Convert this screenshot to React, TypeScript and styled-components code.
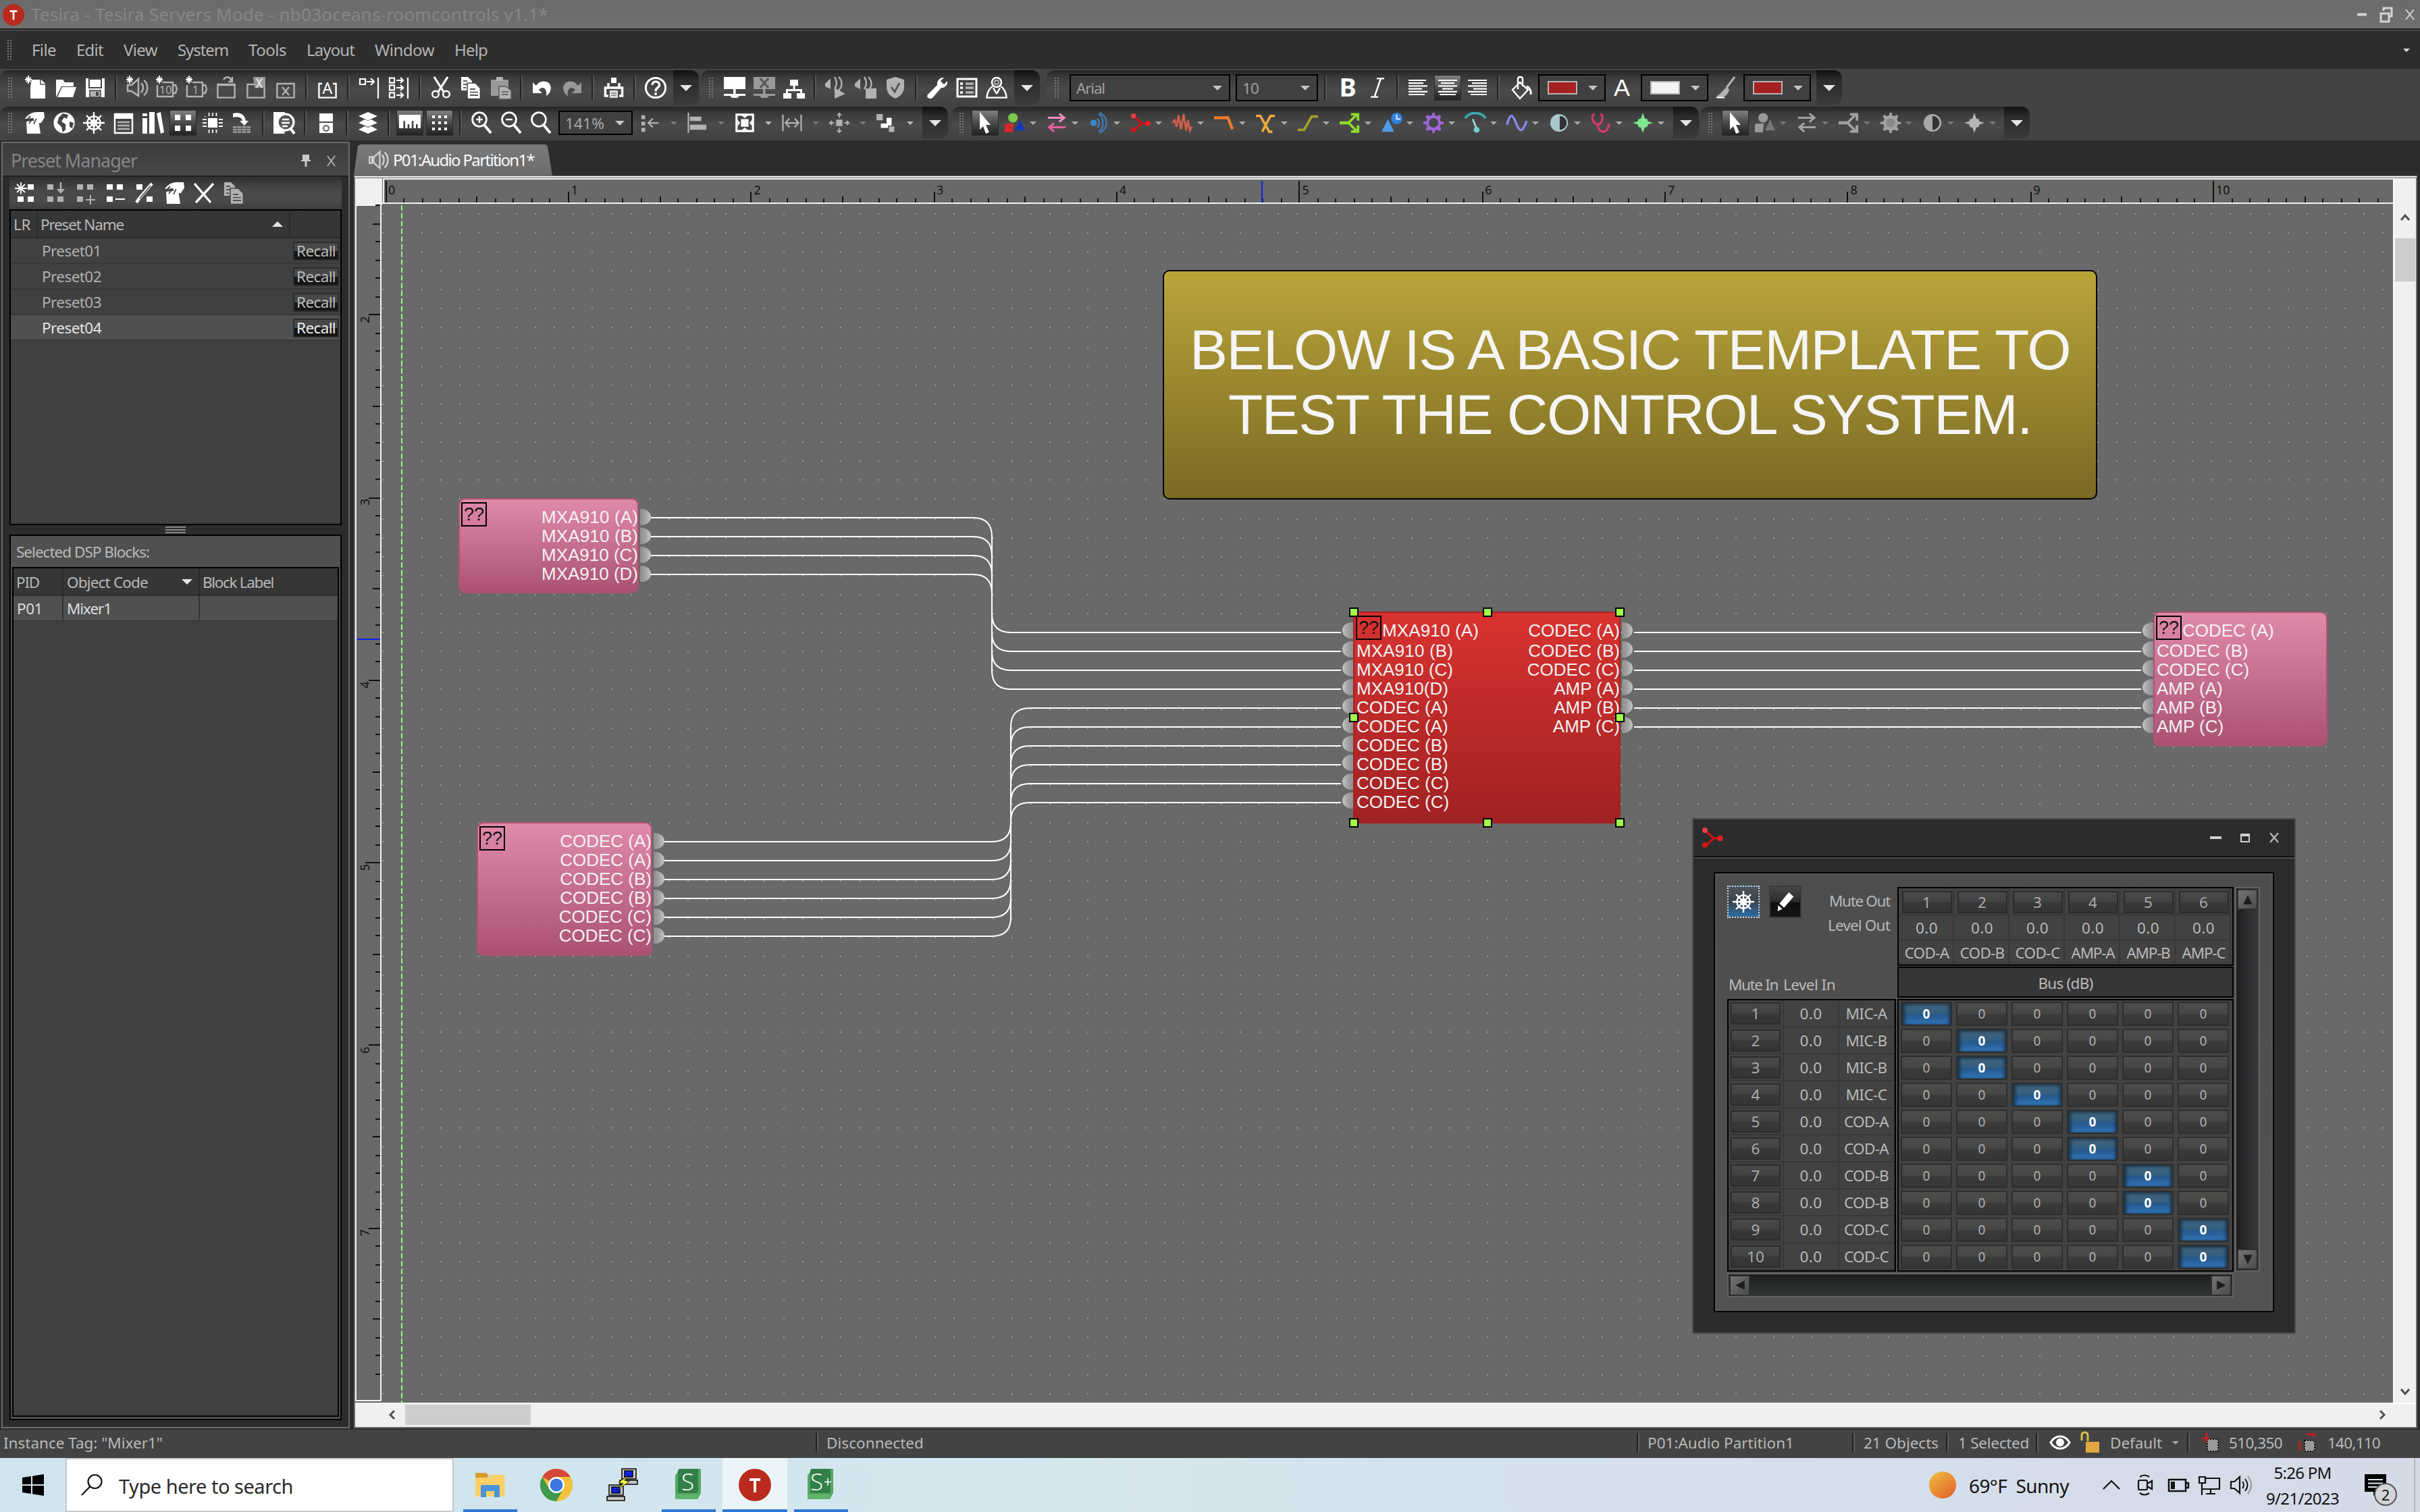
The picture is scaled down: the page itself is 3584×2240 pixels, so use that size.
import React, { useLayoutEffect, useRef, useState } from 'react';
import styled, { createGlobalStyle, css } from 'styled-components';

const tahoma = `"Noto Sans", "DejaVu Sans", sans-serif`;
const segoe = `"Noto Sans", "Open Sans", sans-serif`;
const arial = `"Liberation Sans", Arial, sans-serif`;

const Global = createGlobalStyle`
  * { box-sizing: border-box; }
  body { margin: 0; background: #2c2c2c; overflow: hidden; }
`;

/* ---------- text ---------- */

const TextSpan = styled.span<{ $size: number; $color: string; $font: string; $bold?: boolean }>`
  display: inline-block;
  white-space: pre;
  flex: none;
  font-family: ${p => p.$font};
  font-size: ${p => p.$size}px;
  font-weight: ${p => (p.$bold ? 700 : 400)};
  color: ${p => p.$color};
  line-height: 1.2;
`;

type TextProps = { children: string; w?: number; size?: number; color?: string; font?: string; bold?: boolean };

/** Text whose tracking is adjusted so the string spans `w` pixels. */
function Text({ children, w, size = 22.5, color = '#b9b9b9', font = tahoma, bold }: TextProps) {
  const ref = useRef<HTMLSpanElement>(null);
  const [track, setTrack] = useState(0);
  useLayoutEffect(() => {
    if (!w || !ref.current) return;
    const natural = ref.current.getBoundingClientRect().width - track * children.length;
    setTrack((w - natural) / children.length);
  }, [w, children]);
  return (
    <TextSpan ref={ref} $size={size} $color={color} $font={font} $bold={bold} style={{ letterSpacing: track }}>
      {children}
    </TextSpan>
  );
}

/* ---------- icons: 16 unit grid ---------- */

const W = '#ffffff';
const G = '#b2b2b2';

const Svg = styled.svg<{ $s?: number }>`
  width: ${p => p.$s ?? 32}px;
  height: ${p => p.$s ?? 32}px;
  flex: none;
  display: block;
  overflow: visible;
`;

const st = (c: string, w = 1.2) => ({ fill: 'none', stroke: c, strokeWidth: w });
const pages = (c: string) => (
  <>
    <path d="M1 0h5l3 3v7H1z" fill={c} />
    <path d="M5.500 4.500h6l3.700 3.700V16.300H5.500z" fill={c} stroke="#444" strokeWidth=".8" />
    <path d="M7.500 9h4M7.500 11.300h6M7.500 13.500h6M2.500 3h3M2.500 5.500h2.500M2.500 8h2" {...st('#555', 0.9)} />
  </>
);
const hand = (
  <>
    <path d="M2 7l9-1 1.500 10H2.500z" fill={W} />
    <path d="M1 5C3 2 6 0 10 0h5l.5 4-2.500 4-4 .500-2-4" fill={W} />
    <path d="M1 7l4-4M4 8.500l3-4M7.500 9l1.800-4" {...st('#444', 0.9)} />
  </>
);
const wheel = (
  <g {...st(W, 1.200)}>
    <circle cx="8" cy="8" r="4.800" />
    <circle cx="8" cy="8" r="2" />
    <path d="M8 0v16M0 8h16M2.500 2.500l11 11M13.500 2.500l-11 11" />
  </g>
);
const mixer = (
  <g>
    <path d="M3 3l6 5.500L3 14M9 8.500h5" {...st('#c11', 1.600)} />
    <circle cx="2.500" cy="2.500" r="2" fill="#e84040" />
    <circle cx="2.500" cy="13.500" r="2" fill="#d01818" />
    <circle cx="13.800" cy="8.500" r="2.200" fill="#e02020" />
  </g>
);
const gearPath = 'M7 0h2v2l2 .600 2-1 1 1.400-1 2 .800 2H16v2h-2.200L13 11l1.200 2-1.200 1.400-2-1L9 14v2H7v-2l-2-.600-2 1L1.800 13 3 11l-.800-2H0V7h2.200L3 5 1.800 3 3 1.600l2 1L7 2z';
const shapes = (a: string, b: string, c: string) => (
  <>
    <circle cx="6.500" cy="4" r="3.800" fill={a} />
    <path d="M0 9.500l1-1h6l-.700 7H0z" fill={b} />
    <path d="M8 14l4-8.500 4 8.500z" fill={c} />
  </>
);
const swap = (a: string, b: string) => (
  <>
    <path d="M1 4h13M10 .700L14 4l-4 3.300" {...st(a, 1.600)} />
    <path d="M15 11.500H2M6 8.200L2 11.500l4 3.500" {...st(b, 1.600)} />
  </>
);
const branch = (c: string) => (
  <>
    <path d="M0 8h7" {...st(c, 2.400)} />
    <path d="M7 8L13 2M7 8l6 6M9 1.200h5.500v5M9 14.800h5.500v-5" {...st(c, 2)} />
  </>
);
const star4 = (c: string) => <path d="M8 0l1.500 4.500 2 .5.500 1.800L16 8l-4 1.200-.5 2-2 .5L8 16l-1.500-4.300-2-.5-.5-2L0 8l4-1.200.5-1.800 2-.5z" fill={c} />;
const speaker = (c: string) => (
  <>
    <path d="M1 6h3l5-4.500v12.500L4 10.500H1z" {...st(c, 1.300)} />
    <path d="M11 4.500c2 1.500 2 5 0 7M13 2.500c3.500 2.500 3.500 8.500 0 11" {...st(c, 1.200)} />
  </>
);
const sparkle = (c: string) => <path d="M2.500-1v6M0 2h5M.800.300l3.500 3.500M4.300.300L.800 3.800" {...st(c, 0.900)} />;
const magnifier = (
  <>
    <circle cx="6.500" cy="5.500" r="5.200" {...st(W, 1.400)} />
    <path d="M10 9.500l5 6" {...st(W, 2)} />
  </>
);
const lines = (o: number[][]) => (
  <g {...st(W, 1.100)}>
    {o.map(([a, b], i) => (
      <path key={i} d={`M${a} ${2.500 + i * 2.100}H${b}`} />
    ))}
  </g>
);
const quad = (c: string, skip: number[] = []) =>
  [[2, 1.500], [9.500, 1.500], [2, 10.500], [9.500, 10.500]].map(([x, y], i) =>
    skip.includes(i) ? null : <rect key={i} x={x} y={y} width="4.500" height="4" fill={c} />);

const icons: Record<string, React.ReactNode> = {
  newfile: <><path d="M5 2h7l3 3v11H4V7z" fill={W} /><path d="M11.500 2v3.500H15" {...st('#555', .8)} />{sparkle(W)}<path d="M2.500 0v5" {...st(W, 1)} /></>,
  open: <path d="M1 15V2h5l1.500 2H14v3H5zM2 15L5.500 7.500H16L13.500 15z" fill={W} />,
  save: <><path d="M1 1h14v14H1z" fill={W} /><path d="M3.500 1.500h9V8h-9z" fill={W} stroke="#444" /><rect x="4" y="10" width="8" height="5" fill={G} stroke="#444" strokeWidth=".8" /><rect x="8.500" y="11" width="2" height="3" fill="#444" /></>,
  spk: <>{speaker(G)}{sparkle(W)}</>,
  ten: <><path d="M1 6v8.500h11.500V4H5M12.500 6h2l1 3-1 3h-2" {...st(G)} />{sparkle(W)}<text x="2.500" y="12.500" fontSize="8" fill={G} fontFamily="Noto Sans">10</text></>,
  one: <><path d="M1 6v8.500h11.500V4H5M12.500 6h2l1 3-1 3h-2" {...st(G)} />{sparkle(W)}<text x="5" y="12.500" fontSize="8" fill={G} fontFamily="Noto Sans">1</text></>,
  winfwd: <><path d="M1.700 5.500h12.600v9.800H1.700z" {...st(G)} /><path d="M1.700 6h12.600M6 2c2-3 5-2 6 1M12.500 0v3.500H9.500" {...st(G)} /></>,
  winx: <><path d="M1.700 5.500h12.600v9.800H1.700z" {...st(G)} /><path d="M6 0h9v8H7z" fill="#999" /><path d="M8.500 1l4 7M12.500 1l-4 7" {...st('#e0e0e0')} /></>,
  winclose: <><path d="M1.700 5h12.600v10.300H1.700z" {...st(G)} /><path d="M5.500 7.500l5 6M10.500 7.500l-5 6" {...st(G)} /></>,
  winA: <><path d="M4 5H1.700v10.300h12.600V5H12" {...st(W)} /><text x="4.300" y="12.300" fontSize="11.500" fill={W} fontFamily="Noto Sans">A</text></>,
  toBar: <><path d="M1 1.500h4v4H1z M6 3.500h5M9 1l2.500 2.500L9 6M14.500 .500V16" {...st(W, 1.100)} /></>,
  toBar3: <g {...st(W, 1.100)}><path d="M1 .800h3.500v3.500H1zM1 6.200h3.500v3.500H1zM1 11.700h3.500v3.500H1zM6 2.500h5M6 8h5M6 13.500h5M14.500.500V16" /><path d="M9 .500l2 2-2 2M9 6l2 2-2 2M9 11.500l2 2-2 2" /></g>,
  cut: <><path d="M3 0l7 11M13 0L6 11" {...st(W, 1.600)} /><circle cx="4" cy="12.800" r="2.400" {...st(W)} /><circle cx="12" cy="12.800" r="2.400" {...st(W)} /></>,
  copy: pages(W),
  paste: <><path d="M1 2h13v12H1z" fill="#999" /><path d="M5 0h5v3H5z" fill={G} /><path d="M7 7h5l4 3v6.500H7z" fill={G} stroke="#555" strokeWidth=".7" /><path d="M9 11h5M9 13h5" {...st('#555', .8)} /></>,
  undo: <path d="M1 4v8h7L5.500 9.500C8 6.500 12 8 11 14c4-2 5-9 0-10.500-4-1-6 1-7.500 3z" fill={W} />,
  redo: <path d="M15 4v8H8l2.500-2.500C8 6.500 4 8 5 14 1 12 0 5 5 3.500c4-1 6 1 7.500 3z" fill="#999" />,
  print: <><path d="M6 .500h4v4H6z" fill={W} /><path d="M4 4.500v3.500H1.700V14H4M12 4.500v3.500h2.300V14H12M4 8h8" {...st(W, 1.700)} /><path d="M5 10h6v5.500H5z" fill="#ddd" /><path d="M6 12h4M6 13.700h4" {...st('#777', .7)} /></>,
  help: <><circle cx="8" cy="8" r="7.300" {...st(W, 1.500)} /><path d="M5.500 6C5.500 2.500 10.800 2.700 10.800 6 10.800 8 8 8 8 10.500M8 11.500v2" {...st(W, 1.700)} /></>,
  net: <path d="M0 0h16v9H8.800v3.500H16v1.500h-4.500l-1.500 1.500H6L4.500 14H0v-1.500h7V9H0z" fill={W} />,
  netx: <><path d="M0 0h16v9H8.800v3.500H16v1.500h-4.500l-1.500 1.500H6L4.500 14H0v-1.500h7V9H0z" fill="#999" /><path d="M5 1l6 7M11 1L5 8" {...st('#555', 1.500)} /></>,
  tree: <path d="M5 2h6v4.500H8.700v2.500H14v3h2v4h-6v-4h2.500v-1.500h-9V12H6v4H0v-4h2V9h5.300V6.500H5z" fill={W} />,
  playspk: <><path d="M0 5l4-4v8L0 7z" fill={G} /><path d="M7 0c2 3 2 6 0 9M10 0c3 3 3 7 0 10" {...st(G)} /><path d="M7 8l8 4.500L7 16z" fill={G} /></>,
  stopspk: <><path d="M0 5l4-4v8L0 7z" fill={G} /><path d="M7 0c2 3 2 6 0 9M10 0c3 3 3 7 0 10" {...st(G)} /><path d="M8 8.500h8V16H8z" fill={G} /></>,
  shield: <><path d="M8 0l6.500 2v5c0 5-3 7.500-6.500 9-3.500-1.500-6.500-4-6.500-9V2z" fill={G} /><path d="M5 7.500L7.500 11 11 4.500" {...st('#555', 1.500)} /></>,
  wrench: <path d="M1 13l7-7c-.5-3 2-6 5-5.500L10.500 3l2.500 2.500L15.500 3c.5 3-2 5.500-4.500 5l-6.500 7.500c-2 1.500-5-.500-3.500-2.500z" fill={W} />,
  listbox: <><path d="M1 1.500h14v13H1z" {...st(W, 1.500)} /><path d="M3 5h2M3 8h2M3 11.500h2" {...st(W, 1.800)} /><path d="M7 5h6M7 8h6M7 11.500h6" {...st(G, 1.800)} /></>,
  person: <><circle cx="8" cy="4" r="3.500" {...st(W, 1.300)} /><circle cx="8" cy="4" r="1.500" {...st(G, 1)} /><path d="M5 7C3 8 1 11 .700 15.300h14.600C15 11 13 8 11 7M8 12.500L5.500 8M8 12.500L10.500 8" {...st(W, 1.200)} /></>,
  B: <text x="1.800" y="14.700" fontSize="19" fontWeight="700" fill={W} fontFamily="Noto Sans">B</text>,
  I: <path d="M7.500 1.200h5.500M3 14.800h5.500M10.500 1L5.700 15" {...st(W, 1.200)} />,
  left: lines([[1, 14], [1, 12], [1, 15], [1, 11], [1, 15], [1, 13]]),
  center: lines([[1, 15], [3, 13], [1, 15], [4, 12], [1, 15], [2, 14]]),
  right: lines([[1, 15], [4, 15], [1, 15], [5, 15], [1, 15], [3, 15]]),
  bucket: <><path d="M7 4L1.500 9.500 7 16l6-6.500zM5.500 9V1.500C5.500-.500 9-.500 9 1.500V7" {...st(W, 1.200)} /><path d="M12 7c2.500 1 3.500 4 3 6" {...st(W, 1.500)} /></>,
  A: <text x="0" y="15" fontSize="20.500" fill={W} fontFamily="Liberation Sans">A</text>,
  brush: <><path d="M14.500 0L8.500 8" {...st(G, 1.600)} /><path d="M10.500 9.500L9 7.500C6 9 5 12 1 14.500c4 1.500 8 .5 9.500-5z" fill={G} /><path d="M1 15.200h6" {...st(W, 1)} /></>,
  hand,
  globe: <><circle cx="8" cy="8" r="7.800" fill={W} /><path d="M7 1l4 1-1 3-2-1-2 3 3 2v4l-2 2-1-4-3-3 1-4zM12 7l3 1-1 4-2-1z" fill="#444" /></>,
  wheel,
  panel: <><path d="M1.500 1.500h13v14h-13z" {...st(W, 1.200)} /><path d="M1 1h14v4H1z" fill={W} /><path d="M3.500 7.500h9M3.500 10h9M3.500 12.500h9" {...st(G)} /></>,
  books: <path d="M0 1h3.500v2H0zM0 4.500h3.500V16H0zM5 0h4v16H5zM10.500 1l3-1L16 15l-2.500 1z" fill={W} />,
  quad: <>{[[2, 2], [10, 2], [2, 10], [10, 10]].map(([x, y], i) => <rect key={i} x={x} y={y} width="4" height="4" fill={W} />)}</>,
  chip: <><path d="M4.500 4.500h7v7h-7z" fill={W} /><path d="M8 .500v2.500M8 13v2.500M5.300.500v2.500M10.700.500v2.500M5.300 13v2.500M10.700 13v2.500M.500 8h3M12.500 8h3M.500 5.500h3M12.500 5.500h3M.500 10.500h3M12.500 10.500h3M2.500 3v.500" {...st(W, .9)} /></>,
  curvearr: <><path d="M1 1c6-1.500 9 1.500 9.500 5.500h2L9.500 10 6 6.500h2C7.500 4 5 3 1 4z" fill={W} /><path d="M1 10.500h13v5H1z" fill="#999" /><path d="M1 12.200h13M1 13.900h13M4 10.500v5M7.500 10.500v5M11 10.500v5" {...st('#555', .6)} /></>,
  docsearch: <><path d="M0 0h8l3 3v3L8 16H0z" fill={W} /><circle cx="9" cy="7.500" r="6" fill="#555" stroke={W} strokeWidth="1.600" /><path d="M6.500 5.500h5M6 8h6M6.500 10.500h4" {...st(W)} /><path d="M12.500 12l3 4" {...st(W, 2)} /></>,
  device: <><path d="M3 1h10v6H3zM3 8h10v7.500H3z" fill={W} /><circle cx="8" cy="12" r="2" {...st('#777', 1.200)} /></>,
  layers: <path d="M8 0l7 3-7 3.200L1 3zM8 6.500l2.500-1L15 8l-7 3-7-3 4.500-2.500zM8 11.500l2.500-1L15 13l-7 3-7-3 4.500-2.500z" fill={W} />,
  ruler: <path d="M0 2h16v10h-2.200V9h-1.300v3h-1.800V6.500H9.400V12H7.600V9H6.300v3H4.500V6.500H3.200V12H0z" fill={W} />,
  dots: <>{[2.500, 7, 11.500].map(y => [2.500, 7, 11.500].map(x => <rect key={x + '-' + y} x={x} y={y} width="2" height="2" fill={W} />))}</>,
  zin: <>{magnifier}<path d="M4 5.500h5M6.500 3v5" {...st(W, 1.300)} /></>,
  zout: <>{magnifier}<path d="M4 5.500h5" {...st(W, 1.300)} /></>,
  zoom: magnifier,
  alignpts: <><path d="M1 2h3v3H1zM1 7h3v3H1zM1 12h3v3H1z" fill={G} /><path d="M14.500 8H7M10 4.500L6.500 8l3.500 3.500" {...st(G, 1.200)} /></>,
  alignleft: <><path d="M.800 0v16" {...st(G, 1.200)} /><path d="M2 3h9v3.500H2zM2 9.500h13V13.500H2z" fill={G} /></>,
  fit: <><path d="M1.500 1.500h13v13h-13z" {...st(W, 1.700)} /><path d="M5 5h6v6H5z" fill={W} /><path d="M5.500 2.300h5L8 4.300zM5.500 13.700h5L8 11.700zM2.300 5.500v5L4.300 8zM13.700 5.500v5L11.700 8z" fill={W} /></>,
  span: <path d="M.800 1.500v13M15.200 1.500v13M3 8h10M6 4.500L2.800 8 6 11.500M10 4.500L13.200 8 10 11.500" {...st(G, 1.200)} />,
  nudge: <><path d="M5.500 5.500h5v5h-5z" fill={G} /><path d="M8 4V.500M6.300 2.200L8 .500l1.700 1.700M8 12v3.500M6.300 13.800L8 15.500l1.700-1.700M4 8H.500M2.200 6.300L.500 8l1.700 1.700M12 8h3.500M13.800 6.300L15.500 8l-1.700 1.700" {...st(G, 1)} /></>,
  order: <><path d="M0 1h5v5H0z" fill={G} /><path d="M8 4h4v8H3.500V8.500H8z" fill={W} /><path d="M9.500 10.500h5v5h-5z" fill={G} stroke="#444" strokeWidth=".7" /></>,
  cursor: <path d="M4 0l8 9.500H8.500l2.500 5.500-2.500 1-2-5.500L4 13z" fill={W} />,
  c1: shapes('#7bc84c', '#d42828', '#1238b8'),
  c2: swap('#ec8fc0', '#e45f98'),
  c3: <><circle cx="4" cy="8" r="2.600" fill="#3d86c8" /><path d="M7 4.500c2 2 2 5 0 7M8 1c4.500 2 4.500 12 0 14M9-.200c7 4 7 12 0 16.400" {...st('#3f7fb8', 1.200)} /></>,
  c4: mixer,
  c5: <path d="M0 8l2-2 1.500 5L5 2l2 11L9 1l2 13 1.500-8 1.500 8 1.500-3" {...st('#cf6048', 1.500)} />,
  c6: <path d="M0 4h11l3.500 9" {...st('#ee7a2c', 2.300)} />,
  c7: <path d="M0 2.500h3.500L10.500 15h2.500M15 2.500h-3.500L5 15" {...st('#edab3c', 1.900)} />,
  c8: <path d="M0 13.500h5L11 3h5" {...st('#a2a02a', 2)} />,
  c9: branch('#8edb2c'),
  c10: <><path d="M0 15l5-10 5 10z" fill="#4f9bea" /><circle cx="12" cy="4.500" r="4.500" fill="#2f80e0" /><path d="M12 1.500V5h3" {...st('#cfe6ff', 1.200)} /></>,
  c11: <><path d={gearPath} fill="#a066d8" /><circle cx="8" cy="8" r="3.800" fill="#474747" /></>,
  c12: <><path d="M0 4.500C3-1 13-1 16 4.500" {...st('#3aa8b0', 2)} /><path d="M6 5l3 8" {...st('#9ed8dc', 1.500)} /><circle cx="9" cy="13.500" r="2.300" fill="#74d0d0" /></>,
  c13: <path d="M0 9.500C2 1 4 0 7 8s5 8 8.500-1.500" {...st('#8a8af0', 1.800)} />,
  c14: <><circle cx="8" cy="8" r="7" fill="#a9c6cc" /><path d="M8.500 2.500a5.500 5.500 0 0 1 0 11z" fill="#333" /></>,
  c15: <path d="M3 1C-.500 2 1 8 5.500 9.500 10 8 10 2 7.500 1M5.500 9.500c.5 8 9 7 8.500-1" {...st('#d8386c', 1.700)} />,
  c16: star4('#7de88c'),
  g1: shapes('#999', '#999', '#777'),
  g2: swap('#a2a2a2', '#a2a2a2'),
  g9: branch('#a2a2a2'),
  g11: <><path d={gearPath} fill="#a2a2a2" /><circle cx="8" cy="8" r="3.600" fill="#8a8a8a" /></>,
  g14: <><circle cx="8" cy="8" r="7" fill="#a8a8a8" /><path d="M8 2.500a5.500 5.500 0 0 1 0 11z" fill="#333" /></>,
  g16: star4('#b5b5b5'),
  p1: <>{quad(W, [0])}<path d="M4.500 0v9M0 4.500h9M1.500 1.500l6 6M7.500 1.500l-6 6" {...st(W, .9)} /></>,
  p2: <>{quad(G, [1])}<path d="M12 0v6" {...st(G, 1.200)} /><path d="M9 5h6l-3 3.500z" fill={G} /></>,
  p3: <>{quad(G, [3])}<path d="M12 9.500v7M8.500 13h7" {...st(G, 1)} /></>,
  p4: <>{quad(W, [3])}<path d="M8.500 12.500h7" {...st(W, 1)} /></>,
  p5: <>{quad(W, [1, 2])}<path d="M13.500 1L4 12l-2 3" {...st(W, 2.200)} /><path d="M12.500 2.500L4.500 12" {...st('#555', .8)} /></>,
  p7: <path d="M1 1l12 14M15 1L2 15" {...st(W, 1.700)} />,
  p8: pages(G),
  pencil: <><path d="M11 0l4 3.500L7 13 3 9.500z" fill={W} /><path d="M2 11l3.500 3L1.500 16z" fill={W} /></>,
  mixer,
  spkTab: (
    <>
      <path d="M.700 5.500v5h2v-5zM4 5.800l4.800-4.300v13L4 10.200z" {...st('#d2d2d2', 1.200)} />
      <path d="M10.500 4c2 1.500 2 6.500 0 8M12.500 2c3.500 2.500 3.500 9.500 0 12" {...st('#d2d2d2', 1.300)} />
    </>
  ),
};

const Icon = ({ n, s }: { n: string; s?: number }) => <Svg viewBox="0 0 16 16" $s={s}>{icons[n]}</Svg>;

const Tri = styled.i<{ $s?: number; $c?: string; $up?: boolean }>`
  flex: none;
  width: 0;
  height: 0;
  border: ${p => p.$s ?? 6}px solid transparent;
  ${p => (p.$up ? 'border-top-width: 0; border-bottom-color:' : 'border-bottom-width: 0; border-top-color:')} ${p => p.$c ?? '#c4c4c4'};
`;

/* ---------- window chrome ---------- */

const Page = styled.div`
  width: 3584px;
  height: 2240px;
  display: flex;
  flex-direction: column;
  background: #2c2c2c;
  overflow: hidden;
`;
const TitleBar = styled.header`
  height: 46px;
  flex: none;
  display: flex;
  align-items: center;
  gap: 10px;
  padding: 0 8px 0 4px;
  background: linear-gradient(#6a6a6a, #717171);
  border-bottom: 2px solid #484848;
  box-shadow: inset 0 -2px 0 #262626;
`;
const Spacer = styled.div<{ $w?: number }>`
  ${p => (p.$w ? `width: ${p.$w}px; flex: none;` : 'flex: 1;')}
`;
const MenuBar = styled.nav`
  height: 56px;
  flex: none;
  display: flex;
  align-items: center;
  gap: 30px;
  padding: 0 15px 0 11px;
  background: #2d2d2d;
`;
const Dots = styled.i<{ $h?: number }>`
  width: 6px;
  height: ${p => p.$h ?? 30}px;
  flex: none;
  background: repeating-linear-gradient(#7a7a7a 0 2px, transparent 2px 4px);
  -webkit-mask: linear-gradient(90deg, #000 2px, transparent 2px 4px, #000 4px);
  mask: linear-gradient(90deg, #000 2px, transparent 2px 4px, #000 4px);
`;
const ToolArea = styled.div`
  height: 106px;
  flex: none;
  background: #434343;
  border-top: 2px solid #464646;
  display: flex;
  flex-direction: column;
  gap: 2px;
`;
const ToolRow = styled.div<{ $h: number }>`
  height: ${p => p.$h}px;
  display: flex;
`;
const ToolBar = styled.div<{ $ml?: number }>`
  display: flex;
  align-items: center;
  margin-left: ${p => p.$ml ?? 0}px;
  height: 100%;
  border-radius: 12px;
  overflow: hidden;
  background: linear-gradient(#252525, #3a3a3a 20%, #4a4a4a 55%, #414141);
`;
const Grip = styled.div<{ $w: number }>`
  width: ${p => p.$w}px;
  flex: none;
  padding-left: 12px;
`;
const Cell = styled.div<{ $w?: number; $on?: boolean }>`
  width: ${p => p.$w ?? 44}px;
  height: 100%;
  flex: none;
  display: flex;
  align-items: center;
  justify-content: center;
`;
const Pressed = styled.div`
  width: 40px;
  height: 38px;
  flex: none;
  display: flex;
  align-items: center;
  justify-content: center;
  background: linear-gradient(#808080, #4a4a4a 50%, #222);
  border: 1px solid #2a2a2a;
`;
const Sep = styled.i<{ $w?: number }>`
  width: 4px;
  height: 36px;
  flex: none;
  margin: 0 ${p => ((p.$w ?? 18) - 4) / 2}px;
  background: linear-gradient(90deg, #232323 50%, #565656 50%);
`;
const Overflow = styled.div<{ $ml?: number }>`
  width: 38px;
  height: 100%;
  flex: none;
  margin-left: ${p => p.$ml ?? 4}px;
  display: flex;
  align-items: center;
  justify-content: center;
  background: linear-gradient(#101010, #2c2c2c 30%, #3b3b3b);
`;
const Combo = styled.div<{ $w: number; $ml?: number; $h?: number }>`
  width: ${p => p.$w}px;
  height: ${p => p.$h ?? 40}px;
  margin-left: ${p => p.$ml ?? 0}px;
  flex: none;
  display: flex;
  align-items: center;
  justify-content: space-between;
  padding: 0 10px 0 8px;
  border: 2px solid #000;
  background: #404040;
`;
const Swatch = styled.i<{ $c: string }>`
  width: 44px;
  height: 20px;
  margin-left: 4px;
  background: ${p => p.$c};
  border: 2px solid #b4b4b4;
`;
const Group = styled.div<{ $w: number; $icon: number; $arrow: number }>`
  width: ${p => p.$w}px;
  height: 100%;
  flex: none;
  display: grid;
  grid-template-columns: ${p => p.$icon}px ${p => p.$arrow}px;
  align-items: center;
  justify-items: center;
`;

const items = (s: string) =>
  s.split(' ').map((n, i) => {
    if (n === '|') return <Sep key={i} />;
    const on = n.startsWith('*');
    const icon = <Icon n={on ? n.slice(1) : n} />;
    return <Cell key={i}>{on ? <Pressed>{icon}</Pressed> : icon}</Cell>;
  });
const More = ({ ml }: { ml?: number }) => <Overflow $ml={ml}><Tri $s={9} $c="#e6e6e6" /></Overflow>;
const tools = (list: string[], dim?: boolean) =>
  list.map(n => (
    <Group key={n} $w={62} $icon={44} $arrow={10}><Icon n={n} s={30} /><Tri $s={5} $c={dim ? '#777' : '#aaa'} /></Group>
  ));

const menus: [string, number][] = [['File', 36], ['Edit', 40], ['View', 50], ['System', 75], ['Tools', 56], ['Layout', 71], ['Window', 88], ['Help', 49]];

/* ---------- left panel ---------- */

const Main = styled.main`
  flex: 1;
  min-height: 0;
  display: flex;
  gap: 6px;
  padding: 0 4px 2px 2px;
`;
const Side = styled.aside`
  width: 516px;
  flex: none;
  margin-top: 2px;
  display: flex;
  flex-direction: column;
  background: #2c2c2c;
  border: 2px solid #6a6a6a;
`;
const SideHead = styled.div`
  height: 50px;
  flex: none;
  display: flex;
  align-items: center;
  padding: 4px 18px 0 12px;
  background: linear-gradient(#3c3c3c, #474747);
  border-bottom: 2px solid #202020;
`;
const SideTools = styled.div`
  height: 48px;
  flex: none;
  margin: 0 10px;
  display: flex;
  align-items: center;
  padding-left: 2px;
  background: linear-gradient(#303030, #484848 40%, #4a4a4a 75%, #3e3e3e);
`;
const ListBox = styled.div`
  height: 468px;
  flex: none;
  margin: 0 10px;
  border: 2px solid #000;
  background: #404040;
`;
const HeadRow = styled.div<{ $cols: string }>`
  height: 41px;
  display: grid;
  grid-template-columns: ${p => p.$cols};
  background: #363636;
  border-bottom: 2px solid #2b2b2b;
`;
const BodyRow = styled(HeadRow)<{ $sel?: boolean; $lined?: boolean }>`
  height: 38px;
  background: ${p => (p.$sel ? '#505050' : '#404040')};
  border-bottom: 2px solid #383838;
  & > div { border-right-color: ${p => (p.$lined ? '#343434' : 'transparent')}; }
`;
const Col = styled.div<{ $pl?: number; $pr?: number }>`
  display: flex;
  align-items: center;
  justify-content: space-between;
  padding: 1px ${p => p.$pr ?? 0}px 0 ${p => p.$pl ?? 0}px;
  border-right: 2px solid #2b2b2b;
  &:last-child { border-right: 0; }
`;
const Recall = styled.div`
  width: 68px;
  height: 28px;
  display: flex;
  align-items: center;
  justify-content: center;
  border: 2px solid #2c2c2c;
  background: linear-gradient(#484848 0 48%, #151515 52% 100%);
`;
const Splitter = styled.div`
  height: 14px;
  flex: none;
  display: flex;
  justify-content: center;
  align-items: flex-start;
  padding-top: 2px;
  &::before { content: ''; width: 30px; height: 10px; background: repeating-linear-gradient(#8a8a8a 0 2px, transparent 2px 4px); }
`;
const BlocksBox = styled.div`
  flex: 1;
  margin: 0 10px 10px;
  border: 2px solid #000;
  background: #505050;
  padding: 0 2px 3px;
  display: flex;
  flex-direction: column;
`;
const BlocksTitle = styled.div`
  height: 46px;
  display: flex;
  align-items: center;
  padding-left: 6px;
`;
const Inner = styled.div`
  flex: 1;
  border: 2px solid #000;
  background: #404040;
`;

/* ---------- document ---------- */

const Doc = styled.section`
  flex: 1;
  min-width: 0;
  display: flex;
  flex-direction: column;
`;
const TabStrip = styled.div`
  height: 52px;
  flex: none;
  display: flex;
  align-items: flex-end;
`;
const Tab = styled.div`
  width: 294px;
  height: 46px;
  display: flex;
  align-items: center;
  gap: 6px;
  padding-left: 22px;
  background: linear-gradient(#7a7a7a, #6c6c6c);
  clip-path: polygon(6px 2px, 10px 0, 284px 0, 287px 3px, 294px 100%, 0 100%);
`;
const DocFrame = styled.div`
  flex: 1;
  min-height: 0;
  display: grid;
  grid-template-columns: 40px 2978px 34px;
  grid-template-rows: 38px 1776px 34px;
  border: 2px solid #6a6a6a;
  border-top: 4px double #6a6a6a;
  background: #f0f0f0;
  width: 3056px;
`;
const RulerSvg = styled.svg`
  display: block;
  width: 100%;
  height: 100%;
  background: #696969;
`;
const Canvas = styled.div`
  position: relative;
  overflow: hidden;
  background: #696969;
`;
const CanvasSvg = styled.svg`
  position: absolute;
  inset: 0;
  width: 2978px;
  height: 1776px;
`;
const VScroll = styled.div`
  grid-column: 3;
  grid-row: 1 / 3;
  display: flex;
  flex-direction: column;
  align-items: center;
  justify-content: space-between;
  padding: 50px 0 8px 0;
  border-left: 2px solid #fff;
`;
const HScroll = styled.div`
  grid-column: 2 / 4;
  display: flex;
  align-items: center;
  justify-content: space-between;
  padding: 0 42px 0 7px;
  border-top: 2px solid #fff;
`;
const ScrollEnd = styled.div<{ $col?: boolean }>`
  display: flex;
  flex-direction: ${p => (p.$col ? 'column' : 'row')};
  align-items: center;
  gap: ${p => (p.$col ? 23 : 11)}px;
`;
const Thumb = styled.i<{ $w: number; $h: number }>`
  width: ${p => p.$w}px;
  height: ${p => p.$h}px;
  background: #cdcdcd;
`;
const Chevron = ({ d }: { d: string }) => (
  <Svg viewBox="0 0 16 16" $s={16}><path d={d} fill="none" stroke="#505050" strokeWidth="3" /></Svg>
);

const Banner = styled.div`
  position: absolute;
  left: 1156px;
  top: 98px;
  width: 1384px;
  height: 340px;
  display: flex;
  flex-direction: column;
  align-items: center;
  justify-content: center;
  padding-bottom: 9px;
  border: 2px solid #000;
  border-radius: 10px;
  background: linear-gradient(#baa53a, #7a6a24);
  & > span { line-height: 96px; }
`;
const BlockBox = styled.div<{ $red?: boolean }>`
  position: absolute;
  display: flex;
  justify-content: space-between;
  border-radius: ${p => (p.$red ? 4 : 10)}px;
  border: 2px solid ${p => (p.$red ? '#a42222' : '#b05273')};
  background: ${p => (p.$red ? 'linear-gradient(#d83230, #a02222)' : 'linear-gradient(#e08aaa, #ab5273)')};
`;
const Labels = styled.div<{ $end?: boolean; $gap?: boolean; $indent?: number }>`
  display: flex;
  flex-direction: column;
  align-items: ${p => (p.$end ? 'flex-end' : 'flex-start')};
  padding: 12px ${p => (p.$end ? 0 : 3)}px 0;
  margin-right: ${p => (p.$end ? -1 : 0)}px;
  & > span { line-height: 28px; }
  & > span:first-child {
    margin-bottom: ${p => (p.$gap ? 2 : 0)}px;
    margin-left: ${p => p.$indent ?? 0}px;
  }
`;
const Badge = styled.div`
  position: absolute;
  left: 2px;
  top: 4px;
  width: 38px;
  height: 36px;
  display: flex;
  align-items: center;
  justify-content: center;
  border: 2px solid #000;
`;
const Ports = styled.div<{ $right?: boolean }>`
  position: absolute;
  top: 14px;
  ${p => (p.$right ? 'left: 100%; margin-left: 4px;' : 'right: 100%; margin-right: 2px;')}
  display: flex;
  flex-direction: column;
  gap: 4px;
`;
const Port = styled.i<{ $right?: boolean }>`
  width: 16px;
  height: 24px;
  border-radius: ${p => (p.$right ? '0 14px 14px 0 / 0 12px 12px 0' : '14px 0 0 14px / 12px 0 0 12px')};
  background: linear-gradient(${p => (p.$right ? 90 : 270)}deg, #8e8e8e, #a2a2a2 50%, #c6c6c6);
`;
const Handle = styled.i`
  position: absolute;
  width: 14px;
  height: 14px;
  border: 2px solid #000;
  background: #a0ff48;
`;

type BlockProps = { x: number; y: number; w: number; h: number; red?: boolean; ins?: string[]; outs?: string[]; indent?: number };
const labelWidth = (t: string) => (t.startsWith('MXA910 (') ? 143 : undefined);
function Block({ x, y, w, h, red, ins = [], outs = [], indent }: BlockProps) {
  const gap = ins.length > 0;
  return (
    <BlockBox $red={red} style={{ left: x - 566, top: y - 302, width: w, height: h }}>
      <Labels $gap={gap} $indent={indent}>
        {ins.map((t, i) => <Text key={i} size={26} font={arial} color="#f2f2f2" w={labelWidth(t)}>{t}</Text>)}
      </Labels>
      <Labels $end $gap={gap}>
        {outs.map((t, i) => <Text key={i} size={26} font={arial} color="#f2f2f2" w={labelWidth(t)}>{t}</Text>)}
      </Labels>
      {ins.length > 0 && <Ports>{ins.map((_, i) => <Port key={i} />)}</Ports>}
      {outs.length > 0 && <Ports $right>{outs.map((_, i) => <Port key={i} $right />)}</Ports>}
      <Badge><Text size={27} font={arial} color="#111">??</Text></Badge>
    </BlockBox>
  );
}

const dotPath = (() => {
  let d = '';
  const snap = (v: number) => Math.round(v / 2) * 2;
  for (let r = 0; r < 63; r++) for (let c = 0; c < 106; c++) d += `M${snap(566.6 + c * 28.21)} ${snap(315.7 + r * 28.21)}h2v2h-2z`;
  return d;
})();

const R = 28;
function wire(x0: number, y0: number, mid: number, y1: number, x1: number) {
  const s = y1 > y0 ? 1 : -1;
  return `M${x0} ${y0}H${mid - R}Q${mid} ${y0} ${mid} ${y0 + s * R}V${y1 - s * R}Q${mid} ${y1} ${mid + R} ${y1}H${x1}`;
}
const wires = [
  ...[0, 1, 2, 3].map(i => wire(964, 767 + 28 * i, 1469, 937 + 28 * i, 1986)),
  ...[0, 1, 2, 3, 4, 5].map(i => wire(984, 1247 + 28 * i, 1497, 1049 + 28 * i, 1986)),
  ...[0, 1, 2, 3, 4, 5].map(i => `M2420 ${937 + 28 * i}H3171`),
];

const TopRuler = () => (
  <RulerSvg viewBox="566 264 2978 38" shapeRendering="crispEdges">
    <path d="M568 302V265H3544M566 301H3544" fill="none" stroke="#f4f4f4" strokeWidth="2" />
    {Array.from({ length: 110 }, (_, i) => {
      const x = 571 + i * 27.07;
      const top = i % 50 === 0 ? 268 : i % 10 === 0 ? 284 : i % 5 === 0 ? 291 : 294;
      return <path key={i} d={`M${Math.round(x / 2) * 2} ${top}V300`} stroke="#111" strokeWidth="2" />;
    })}
    {Array.from({ length: 11 }, (_, i) => (
      <text key={i} x={571 + i * 270.7 + 4} y={288} fontFamily="Noto Sans" fontSize="18" fill="#111">{i}</text>
    ))}
    <path d="M1869 268V300" stroke="#1020f0" strokeWidth="2" />
  </RulerSvg>
);
const SideRuler = () => (
  <RulerSvg viewBox="526 302 40 1776" shapeRendering="crispEdges">
    <path d="M526 303H566" stroke="#f0f0f0" strokeWidth="2" />
    <path d="M527 304H564V2075H527z" fill="none" stroke="#f4f4f4" strokeWidth="2" />
    {Array.from({ length: 65 }, (_, i) => {
      const n = i + 14;
      const y = Math.round((466.5 + (n - 20) * 27.06) / 2) * 2;
      const left = n % 50 === 0 ? 541 : n % 10 === 0 ? 546 : n % 5 === 0 ? 552 : 556;
      return <path key={i} d={`M${left} ${y}H563`} stroke="#111" strokeWidth="2" />;
    })}
    {[2, 3, 4, 5, 6, 7].map(n => (
      <text key={n} transform={`translate(547 ${466.5 + (n - 2) * 270.6 + 12}) rotate(-90)`} fontFamily="Noto Sans" fontSize="18" fill="#111">{n}</text>
    ))}
    <path d="M529 947H563" stroke="#1020f0" strokeWidth="2" />
  </RulerSvg>
);

/* ---------- mixer dialog ---------- */

const Dialog = styled.div`
  position: absolute;
  left: 1940px;
  top: 910px;
  width: 894px;
  height: 764px;
  display: flex;
  flex-direction: column;
  background: #2c2c2c;
  border: 2px solid #4c4c4c;
`;
const DialogBar = styled.div`
  height: 58px;
  flex: none;
  display: flex;
  align-items: center;
  padding: 0 22px 2px 12px;
  gap: 28px;
  border-bottom: 2px solid #484848;
  box-shadow: inset 0 -2px 0 #111;
`;
const Glyph = styled.i<{ $kind: 'min' | 'max' }>`
  width: ${p => (p.$kind === 'min' ? 17 : 14)}px;
  height: ${p => (p.$kind === 'min' ? 4 : 13)}px;
  border: 2px solid #d0d0d0;
  border-top-width: 4px;
  ${p => p.$kind === 'min' && 'border-width: 2px 0; background: #d0d0d0;'}
`;
const DialogPanel = styled.div`
  width: 830px;
  height: 652px;
  margin: 20px 0 0 30px;
  border: 2px solid #000;
  padding: 20px 18px;
  display: grid;
  grid-template-columns: 250px 498px 37px;
  grid-template-rows: 164px 404px 36px;
  gap: 2px;
  background: linear-gradient(#4d4d4d, #525252);
  box-shadow: inset 0 0 4px #666;
`;
const Corner = styled.div`
  display: flex;
  flex-direction: column;
  justify-content: space-between;
  padding-bottom: 6px;
`;
const CornerTop = styled.div`
  display: flex;
  gap: 14px;
  margin-top: -2px;
`;
const SquareBtn = styled.div<{ $on?: boolean }>`
  width: 48px;
  height: 48px;
  display: flex;
  align-items: center;
  justify-content: center;
  ${p => p.$on
    ? css`border: 2px dotted #d8d8d8; background: linear-gradient(#4c5258, #38444e 50%, #2c6ca6);`
    : css`border: 2px solid #3a3a3a; background: linear-gradient(#474747, #2c2c2c 48%, #0e0e0e 54%, #141414);`}
`;
const CornerLabels = styled.div`
  flex: 1;
  display: flex;
  flex-direction: column;
  align-items: flex-end;
  padding: 9px 9px 0 0;
  gap: 9px;
`;
const InLabels = styled.div`
  display: flex;
  gap: 8px;
  padding-left: 2px;
`;
const Heads = styled.div`
  display: flex;
  flex-direction: column;
  gap: 1px;
`;
const Table = styled.div<{ $cols: string; $rows: string }>`
  display: grid;
  grid-template-columns: ${p => p.$cols};
  grid-template-rows: ${p => p.$rows};
  border: 2px solid #000;
  background: #424242;
`;
const TCell = styled.div<{ $plain?: boolean; $head?: boolean }>`
  display: flex;
  align-items: center;
  justify-content: center;
  ${p => !p.$plain && 'border-right: 2px solid #383838; border-bottom: 2px solid #383838;'}
  ${p => p.$head && 'padding: 2px 0 0 3px;'}
`;
const MuteBtn = styled.div`
  width: 74px;
  height: 33px;
  display: flex;
  align-items: center;
  justify-content: center;
  border: 2px solid #2c2c2c;
  background: linear-gradient(#4a4a4a, #424242 48%, #383838 52%, #343434);
`;
const CrossBtn = styled.div<{ $on: boolean }>`
  width: 76px;
  height: 36px;
  display: flex;
  align-items: center;
  justify-content: center;
  border: 2px solid #2e2e2e;
  border-radius: 2px;
  background: ${p => (p.$on ? 'linear-gradient(#44667e, #355f80 45%, #26598c 55%, #2a64a0 75%, #337cc0)' : 'linear-gradient(#4d4d4b, #464645 48%, #3b3b3b 52%, #353535)')};
  ${p => p.$on && 'box-shadow: inset 4px 2px 5px #1c3444, inset -3px 0 4px #1c3850;'}
`;
const Bus = styled.div`
  flex: 1;
  display: flex;
  align-items: center;
  justify-content: center;
  padding-top: 3px;
  border: 2px solid #000;
  background: #363636;
`;
const Track = styled.div<{ $h?: boolean }>`
  display: flex;
  flex-direction: ${p => (p.$h ? 'row' : 'column')};
  justify-content: space-between;
  align-items: center;
  padding: 1px;
  border: 2px solid #646464;
  ${p => p.$h
    ? css`grid-column: 1 / 3; background: linear-gradient(#1c1e1e, #333636);`
    : css`grid-column: 3; grid-row: 1 / 3; background: linear-gradient(90deg, #1c1e1e, #383a3c);`}
`;
const TrackBtn = styled.div`
  width: 31px;
  height: 31px;
  display: flex;
  align-items: center;
  justify-content: center;
  border: 2px solid #2e2e2e;
  background: linear-gradient(135deg, #757575, #4a4a4a);
`;
const TrackArrow = ({ d }: { d: string }) => (
  <TrackBtn><Svg viewBox="0 0 16 16" $s={18}><path d={d} fill="#1c1c1c" /></Svg></TrackBtn>
);

const outNames = ['COD-A', 'COD-B', 'COD-C', 'AMP-A', 'AMP-B', 'AMP-C'];
const inNames = ['MIC-A', 'MIC-B', 'MIC-B', 'MIC-C', 'COD-A', 'COD-A', 'COD-B', 'COD-B', 'COD-C', 'COD-C'];
const routes = [0, 1, 1, 2, 3, 3, 4, 4, 5, 5];

const MixerDialog = () => (
  <Dialog>
    <DialogBar>
      <Icon n="mixer" s={32} />
      <Spacer />
      <Glyph $kind="min" />
      <Glyph $kind="max" />
      <Svg viewBox="0 0 16 16" $s={16}><path d="M2 1l12 14M14 1L2 15" fill="none" stroke="#b8b8b8" strokeWidth="2.200" /></Svg>
    </DialogBar>
    <DialogPanel>
      <Corner>
        <CornerTop>
          <SquareBtn $on><Icon n="wheel" /></SquareBtn>
          <SquareBtn><Icon n="pencil" s={28} /></SquareBtn>
          <CornerLabels><Text w={90}>Mute Out</Text><Text w={92}>Level Out</Text></CornerLabels>
        </CornerTop>
        <InLabels><Text w={73}>Mute In</Text><Text w={77}>Level In</Text></InLabels>
      </Corner>
      <Heads>
        <Table $cols="repeat(6, 82px)" $rows="40px 37px 36px">
          {outNames.map((n, i) => <TCell $head key={n}><MuteBtn><Text color="#aaa">{String(i + 1)}</Text></MuteBtn></TCell>)}
          {outNames.map(n => <TCell $head key={n}><Text w={33}>0.0</Text></TCell>)}
          {outNames.map(n => <TCell $head key={n}><Text w={n[0] === 'A' ? 64 : 66}>{n}</Text></TCell>)}
        </Table>
        <Bus><Text w={81}>Bus (dB)</Text></Bus>
      </Heads>
      <Track>
        <TrackArrow d="M8 2l6 12H2z" />
        <TrackArrow d="M8 14L2 2h12z" />
      </Track>
      <Table $cols="82px 82px 82px" $rows="repeat(10, 40px)">
        {inNames.map((n, i) => (
          <React.Fragment key={i}>
            <TCell><MuteBtn><Text color="#aaa">{String(i + 1)}</Text></MuteBtn></TCell>
            <TCell><Text w={33}>0.0</Text></TCell>
            <TCell><Text w={n[0] === 'M' ? 61 : 66}>{n}</Text></TCell>
          </React.Fragment>
        ))}
      </Table>
      <Table $cols="repeat(6, 82px)" $rows="repeat(10, 40px)">
        {routes.map((r, i) => outNames.map((_, c) => (
          <TCell $plain key={`${i}-${c}`}><CrossBtn $on={r === c}><Text size={19} bold={r === c} color={r === c ? '#fff' : '#b0b0b0'}>0</Text></CrossBtn></TCell>
        )))}
      </Table>
      <Track $h>
        <TrackArrow d="M2 8L14 2v12z" />
        <TrackArrow d="M14 8L2 2v12z" />
      </Track>
    </DialogPanel>
  </Dialog>
);

/* ---------- status bar and taskbar ---------- */

const Status = styled.footer`
  height: 42px;
  flex: none;
  background: #434343;
  display: flex;
  align-items: center;
  padding: 0 59px 4px 5px;
`;
const StatusSep = styled.i<{ $l: number; $r: number }>`
  width: 4px;
  height: 28px;
  margin: 0 ${p => p.$r}px 0 ${p => p.$l}px;
  flex: none;
  background: linear-gradient(90deg, #202020 50%, #5c5c5c 50%);
`;
const Taskbar = styled.footer`
  height: 80px;
  flex: none;
  display: flex;
  background: linear-gradient(90deg, #cfe4ee, #d4e6ee 45%, #d5dfec 75%, #d5dae7);
`;
const StartBtn = styled.div`
  width: 97px;
  flex: none;
  display: flex;
  align-items: center;
  justify-content: center;
`;
const Search = styled.div`
  width: 575px;
  flex: none;
  display: flex;
  align-items: center;
  gap: 24px;
  padding-left: 21px;
  background: #fff;
  border: 2px solid #c6c8ca;
  & > span { padding-top: 4px; }
`;
const TaskItem = styled.div<{ $w: number; $ml: number; $run?: boolean; $active?: boolean }>`
  width: ${p => p.$w}px;
  margin-left: ${p => p.$ml}px;
  flex: none;
  display: flex;
  align-items: center;
  justify-content: center;
  background: ${p => (p.$active ? '#ebf4f8' : 'transparent')};
  border-bottom: 4px solid ${p => (p.$run ? '#2e78d4' : 'transparent')};
  padding-top: 4px;
`;
const Tray = styled.div`
  display: flex;
  align-items: center;
  margin-left: auto;
  & > span { padding-top: 3px; }
`;
const Clock = styled.div`
  width: 110px;
  margin-left: 20px;
  display: flex;
  flex-direction: column;
  align-items: center;
  padding-top: 2px;
  gap: 9px;
`;
const NoteWrap = styled.div`
  position: relative;
  margin-left: 37px;
  width: 75px;
  height: 80px;
  padding-top: 24px;
  border-right: 2px solid #b0b4bc;
  margin-right: 7px;
`;
const Count = styled.div`
  position: absolute;
  left: 14px;
  top: 37px;
  width: 34px;
  height: 34px;
  border-radius: 50%;
  display: flex;
  align-items: center;
  justify-content: center;
  background: #d2d4d8;
  border: 2px solid #555;
`;

const TLogo = ({ s }: { s: number }) => (
  <Svg viewBox="0 0 48 48" $s={s}>
    <circle cx="24" cy="24" r="24" fill="#bb2a1e" />
    <path d="M16 14h16v4h-6V35h-4V18h-6z" fill="#fff" />
  </Svg>
);
const SLogo = ({ plus }: { plus?: boolean }) => (
  <Svg viewBox="0 0 48 48" $s={48}>
    <path d="M8 4q0-4 4-4h30v36l-5 9H4V10z" fill="#55a862" />
    <path d="M8 4q0-4 4-4h26v33q0 3-4 3H8z" fill="#337f49" />
    <path d="M4 38h33v7H4z" fill="#5eb46b" />
    <text x={plus ? 8 : 13} y="32" fontFamily="Open Sans" fontWeight="300" fontSize="35" fill="#fff">S</text>
    {plus && <path d="M34 14v11M29 19.500h10" stroke="#fff" strokeWidth="1.500" />}
  </Svg>
);
const PC = ({ x, y }: { x: number; y: number }) => (
  <g transform={`translate(${x} ${y})`} stroke="#000" strokeWidth="1.500">
    <path d="M4 0h18l3-0v15h-21z" fill="#c8c8c8" />
    <path d="M8 3h12v9H8z" fill="#1020ff" />
    <path d="M1 17h26v6H1z" fill="#c8c8c8" />
  </g>
);

export default function App() {
  const codec3 = ['CODEC (A)', 'CODEC (B)', 'CODEC (C)'];
  const amp3 = ['AMP (A)', 'AMP (B)', 'AMP (C)'];
  return (
    <Page>
      <Global />
      <TitleBar>
        <TLogo s={32} />
        <Text w={766} size={26} font={segoe} color="#868686">Tesira - Tesira Servers Mode - nb03oceans-roomcontrols v1.1*</Text>
        <Spacer />
        <Svg viewBox="0 0 88 32" style={{ width: 88, height: 32 }}>
          <path d="M3 15.500h14" stroke="#d4d4d4" strokeWidth="4" />
          <path d="M42 10V6h12v12h-4M38 14h12v12H38z" fill="none" stroke="#d4d4d4" strokeWidth="3" />
          <path d="M75 8l12 15M87 8L75 23" stroke="#d4d4d4" strokeWidth="2" />
        </Svg>
      </TitleBar>
      <MenuBar>
        <Dots />
        {menus.map(([t, w]) => <Text key={t} w={w} size={24} font={segoe} color="#b4b4b4">{t}</Text>)}
        <Spacer />
        <Tri $s={5} $c="#ddd" />
      </MenuBar>

      <ToolArea>
        <ToolRow $h={52}>
          <ToolBar>
            <Grip $w={31}><Dots as="div" /></Grip>
            {items('newfile open save | spk ten one winfwd winx winclose | winA | toBar toBar3 | cut copy paste | undo redo | print | help')}
            <More />
          </ToolBar>
          <ToolBar $ml={3}>
            <Grip $w={28}><Dots as="div" /></Grip>
            {items('net netx tree | playspk stopspk shield | wrench listbox person')}
            <More />
          </ToolBar>
          <ToolBar $ml={10}>
            <Grip $w={34}><Dots as="div" /></Grip>
            <Combo $w={238}><Text w={42} color="#a0a0a0">Arial</Text><Tri $s={7} /></Combo>
            <Combo $w={122} $ml={8}><Text w={24} color="#a0a0a0">10</Text><Tri $s={7} /></Combo>
            <Sep $w={22} />
            {items('B I')}
            <Sep $w={16} />
            {items('left *center right |')}
            <Cell $w={50}><Icon n="bucket" /></Cell>
            <Combo $w={100}><Swatch $c="#a52020" /><Tri $s={7} /></Combo>
            <Cell $w={52}><Icon n="A" s={28} /></Cell>
            <Combo $w={100}><Swatch $c="#f4f4f4" /><Tri $s={7} /></Combo>
            <Cell $w={52}><Icon n="brush" /></Cell>
            <Combo $w={100}><Swatch $c="#a52020" /><Tri $s={7} /></Combo>
            <More ml={8} />
          </ToolBar>
        </ToolRow>
        <ToolRow $h={48}>
          <ToolBar>
            <Grip $w={29}><Dots as="div" /></Grip>
            {items('hand globe wheel panel books *quad chip curvearr | docsearch | device | layers | *ruler *dots | zin zout zoom')}
            <Combo $w={110} $h={36} $ml={4}><Text w={58} color="#a8a8a8">141%</Text><Tri $s={7} /></Combo>
            {['alignpts', 'alignleft', 'fit', 'span', 'nudge', 'order'].map((n, i) => (
              <Group key={n} $w={70} $icon={52} $arrow={18}><Icon n={n} s={30} /><Tri $s={5} $c={i === 2 || i === 5 ? '#bbb' : '#777'} /></Group>
            ))}
            <More ml={9} />
          </ToolBar>
          <ToolBar $ml={5}>
            <Grip $w={28}><Dots as="div" /></Grip>
            {items('*cursor')}
            {tools(Array.from({ length: 16 }, (_, i) => `c${i + 1}`))}
            <More ml={5} />
          </ToolBar>
          <ToolBar $ml={2}>
            <Grip $w={30}><Dots as="div" /></Grip>
            {items('*cursor')}
            {tools(['g1', 'g2', 'g9', 'g11', 'g14', 'g16'], true)}
            <More />
          </ToolBar>
        </ToolRow>
      </ToolArea>

      <Main>
        <Side>
          <SideHead>
            <Text w={187} size={27} font={segoe} color="#858585">Preset Manager</Text>
            <Spacer />
            <Svg viewBox="0 0 16 18" $s={18}><path d="M3 0h10v8h2v2H9.500v8h-3v-8H1V8h2z" fill="#c8c8c8" /></Svg>
            <Spacer $w={21} />
            <Svg viewBox="0 0 16 16" $s={15}><path d="M2 0l12 16M14 0L2 16" fill="none" stroke="#b0b0b0" strokeWidth="2" /></Svg>
          </SideHead>
          <SideTools>{items('p1 p2 p3 p4 p5 hand p7 p8')}</SideTools>
          <ListBox>
            <HeadRow $cols="40px 374px 1fr">
              <Col $pl={4}><Text w={25}>LR</Text></Col>
              <Col $pl={4} $pr={9}><Text w={123}>Preset Name</Text><Tri $up $s={8} $c="#e4e4e4" /></Col>
              <Col />
            </HeadRow>
            {[1, 2, 3, 4].map(n => (
              <BodyRow key={n} $cols="40px 374px 1fr" $sel={n === 4}>
                <Col />
                <Col $pl={6}><Text w={88} color={n === 4 ? '#e4e4e4' : '#b0b0b0'}>{`Preset0${n}`}</Text></Col>
                <Col $pl={4}><Recall><Text w={58} color={n === 4 ? '#eee' : '#bbb'}>Recall</Text></Recall></Col>
              </BodyRow>
            ))}
          </ListBox>
          <Splitter />
          <BlocksBox>
            <BlocksTitle><Text w={197}>Selected DSP Blocks:</Text></BlocksTitle>
            <Inner>
              <HeadRow $cols="74px 202px 1fr">
                <Col $pl={4}><Text w={34}>PID</Text></Col>
                <Col $pl={5} $pr={9}><Text w={120}>Object Code</Text><Tri $s={8} $c="#e4e4e4" /></Col>
                <Col $pl={4}><Text w={105}>Block Label</Text></Col>
              </HeadRow>
              <BodyRow $cols="74px 202px 1fr" $sel $lined>
                <Col $pl={5}><Text w={38} color="#dcdcdc">P01</Text></Col>
                <Col $pl={5}><Text w={66} color="#dcdcdc">Mixer1</Text></Col>
                <Col />
              </BodyRow>
            </Inner>
          </BlocksBox>
        </Side>

        <Doc>
          <TabStrip>
            <Tab>
              <Icon n="spkTab" s={30} />
              <Text w={209} size={24} font={segoe} color="#fafafa">P01:Audio Partition1*</Text>
            </Tab>
          </TabStrip>
          <DocFrame>
            <div />
            <TopRuler />
            <VScroll>
              <ScrollEnd $col>
                <Chevron d="M2 12l6-7 6 7" />
                <Thumb $w={30} $h={64} />
              </ScrollEnd>
              <Chevron d="M2 4l6 7 6-7" />
            </VScroll>
            <SideRuler />
            <Canvas>
              <CanvasSvg viewBox="566 302 2978 1776">
                <path d={dotPath} fill="#9a9a9a" shapeRendering="crispEdges" />
                <path d="M595 304V2078" stroke="#a4ee98" strokeWidth="2" strokeDasharray="8 3.500" />
                {wires.map((d, i) => <path key={i} d={d} fill="none" stroke="#fff" strokeWidth="2" />)}
              </CanvasSvg>
              <Banner>
                <Text size={84} font={arial} color="#f5f5f5" w={1304}>BELOW IS A BASIC TEMPLATE TO</Text>
                <Text size={84} font={arial} color="#f5f5f5" w={1190}>TEST THE CONTROL SYSTEM.</Text>
              </Banner>
              <Block x={679} y={738} w={267} h={141} outs={['MXA910 (A)', 'MXA910 (B)', 'MXA910 (C)', 'MXA910 (D)']} />
              <Block x={706} y={1218} w={260} h={198} outs={['CODEC (A)', 'CODEC (A)', 'CODEC (B)', 'CODEC (B)', 'CODEC (C)', 'CODEC (C)']} />
              <Block x={2004} y={906} w={396} h={314} red indent={38}
                ins={['MXA910 (A)', 'MXA910 (B)', 'MXA910 (C)', 'MXA910(D)', 'CODEC (A)', 'CODEC (A)', 'CODEC (B)', 'CODEC (B)', 'CODEC (C)', 'CODEC (C)']}
                outs={[...codec3, ...amp3]} />
              <Block x={3189} y={906} w={258} h={200} indent={38} ins={[...codec3, ...amp3]} />
              {[907, 1063, 1219].map(y => [2005, 2203, 2399].map(x =>
                y === 1063 && x === 2203 ? null : <Handle key={`${x}-${y}`} style={{ left: x - 573, top: y - 309 }} />))}
              <MixerDialog />
            </Canvas>
            <div />
            <HScroll>
              <ScrollEnd>
                <Chevron d="M11 2L5 8l6 6" />
                <Thumb $w={186} $h={30} />
              </ScrollEnd>
              <Chevron d="M5 2l6 6-6 6" />
            </HScroll>
          </DocFrame>
        </Doc>
      </Main>

      <Status>
        <Text w={236}>Instance Tag: "Mixer1"</Text>
        <Spacer $w={967} />
        <StatusSep $l={0} $r={12} />
        <Text w={144}>Disconnected</Text>
        <Spacer />
        <StatusSep $l={0} $r={12} />
        <Text w={217}>P01:Audio Partition1</Text>
        <StatusSep $l={86} $r={13} />
        <Text w={111}>21 Objects</Text>
        <StatusSep $l={11} $r={14} />
        <Text w={105}>1 Selected</Text>
        <StatusSep $l={10} $r={16} />
        <Svg viewBox="0 0 32 32" $s={32}>
          <path d="M2 16C9 4 23 4 30 16 23 28 9 28 2 16z" fill="none" stroke="#fff" strokeWidth="3" />
          <circle cx="16" cy="16" r="6" fill="#fff" />
        </Svg>
        <Spacer $w={12} />
        <Svg viewBox="0 0 32 32" $s={32}>
          <path d="M4 13V6q0-5 4.500-5T13 6v8" fill="none" stroke="#d8c04c" strokeWidth="3" />
          <path d="M10 15h20v16H10z" fill="#e2a840" />
        </Svg>
        <Spacer $w={14} />
        <Text w={77}>Default</Text>
        <Spacer $w={15} />
        <Tri $s={5} $c="#aaa" />
        <StatusSep $l={12} $r={15} />
        <Svg viewBox="0 0 32 32" $s={32}>
          <rect x="11" y="11" width="16" height="18" fill="#999" stroke="#111" strokeWidth="2" strokeDasharray="2 2" />
          <path d="M2 10h12M10 2v14" stroke="#c22" strokeWidth="2.500" />
        </Svg>
        <Spacer $w={11} />
        <Text w={79}>510,350</Text>
        <Spacer $w={21} />
        <Svg viewBox="0 0 32 32" $s={32}>
          <rect x="12" y="13" width="15" height="16" fill="#999" stroke="#111" strokeWidth="2" strokeDasharray="2 2" />
          <path d="M14 4h12M26 1v7M5 14v14" stroke="#b22" strokeWidth="3" />
        </Svg>
        <Spacer $w={14} />
        <Text w={78}>140,110</Text>
      </Status>

      <Taskbar>
        <StartBtn>
          <Svg viewBox="0 0 32 32" $s={32}><path d="M0 5l13-2v12H0zM15 2.700L32 0v15H15zM0 17h13v12L0 27zM15 17h17v15l-17-2.700z" fill="#000" /></Svg>
        </StartBtn>
        <Search>
          <Svg viewBox="0 0 32 32" $s={32}><circle cx="20.500" cy="11" r="10" fill="none" stroke="#111" strokeWidth="2.200" /><path d="M13.500 18L1 31" stroke="#111" strokeWidth="2.200" /></Svg>
          <Text w={258} size={29} font={segoe} color="#2a2a2a">Type here to search</Text>
        </Search>
        <TaskItem $w={80} $ml={14} $run>
          <Svg viewBox="0 0 44 36" style={{ width: 44, height: 36 }}>
            <path d="M0 1q0-1 1-1h15l5 5h-3v4H0z" fill="#d79b2e" />
            <path d="M0 7h20l3-4h19q1.500 0 1.500 1.500V34q0 1-1 1H1q-1 0-1-1z" fill="#f9d066" />
            <path d="M8 36V20q0-2 2-2h24q2 0 2 2v16h-8v-9H16v9z" fill="#4a93d9" />
          </Svg>
        </TaskItem>
        <TaskItem $w={80} $ml={18}>
          <Svg viewBox="0 0 48 48" $s={48}>
            <circle cx="24" cy="24" r="24" fill="#f3c13a" />
            <path d="M24 24L3.200 12A24 24 0 0 1 44.800 12z" fill="#d6473a" />
            <path d="M3.200 12A24 24 0 0 0 24 48L34.500 30 24 24 13.600 30z" fill="#3f9a4f" />
            <path d="M24 12h20.800A24 24 0 0 1 24 48l10.500-18z" fill="#f3c13a" />
            <circle cx="24" cy="24" r="12" fill="#fff" />
            <circle cx="24" cy="24" r="9.500" fill="#3c78e0" />
          </Svg>
        </TaskItem>
        <TaskItem $w={80} $ml={18}>
          <Svg viewBox="0 0 48 48" $s={48}>
            <PC x={19} y={0} /><PC x={0} y={24} />
            <path d="M34 9L18 20l7 2-11 11 20-14-7-2z" fill="#f4f43a" stroke="#000" strokeWidth=".8" />
          </Svg>
        </TaskItem>
        <TaskItem $w={80} $ml={18} $run><SLogo /></TaskItem>
        <TaskItem $w={96} $ml={10} $run $active><TLogo s={48} /></TaskItem>
        <TaskItem $w={80} $ml={10} $run><SLogo plus /></TaskItem>
        <Tray>
          <Svg viewBox="0 0 40 40" $s={40}>
            <defs><linearGradient id="sun" x1="0" y1="0" x2=".7" y2="1"><stop offset="0" stopColor="#f0c040" /><stop offset="1" stopColor="#e2682c" /></linearGradient></defs>
            <circle cx="20" cy="20" r="20" fill="url(#sun)" />
          </Svg>
          <Spacer $w={19} />
          <Text w={148} size={28} font={segoe} color="#111">69°F  Sunny</Text>
          <Spacer $w={50} />
          <Svg viewBox="0 0 26 16" style={{ width: 26, height: 16 }}><path d="M1 14L13 2l12 12" fill="none" stroke="#111" strokeWidth="2.200" /></Svg>
          <Spacer $w={21} />
          <Svg viewBox="0 0 32 32" $s={32}><g fill="none" stroke="#111" strokeWidth="2.200"><rect x="6" y="9" width="13" height="14" rx="2" /><path d="M19 14l7-4v12l-7-4M8 4q7-5 14 0M8 28q7 5 14 0" /></g></Svg>
          <Spacer $w={17} />
          <Svg viewBox="0 0 32 32" $s={32}><path d="M2 8h25v17H2zM28 13h3v7h-3" fill="none" stroke="#111" strokeWidth="2.500" /><path d="M5 11h6v11H5z" fill="#111" /></Svg>
          <Spacer $w={14} />
          <Svg viewBox="0 0 32 32" $s={32}><path d="M11 6h20v16H5V12M18 22v7M11 29h14M1 4h9v9H1zM5 13v18" fill="none" stroke="#111" strokeWidth="2.200" /></Svg>
          <Spacer $w={15} />
          <Svg viewBox="0 0 32 32" $s={32}><path d="M1 11h5l8-7v24l-8-7H1z" fill="none" stroke="#111" strokeWidth="2.200" /><path d="M18 11q4 5 0 10M22 7q7 9 0 18" fill="none" stroke="#111" strokeWidth="2" /><path d="M26 3q10 13 0 26" fill="none" stroke="#999" strokeWidth="2" /></Svg>
          <Clock>
            <Text w={85} size={24} font={segoe} color="#111">5:26 PM</Text>
            <Text w={108} size={24} font={segoe} color="#111">9/21/2023</Text>
          </Clock>
          <NoteWrap>
            <Svg viewBox="0 0 32 32" $s={32}><path d="M0 0h32v26H18l-5 6v-6H0z" fill="#000" /><path d="M5 8h22M5 13.500h22M5 19h14" stroke="#dfe4ea" strokeWidth="2.200" /></Svg>
            <Count><Text size={22} font={segoe} color="#111">2</Text></Count>
          </NoteWrap>
        </Tray>
      </Taskbar>
    </Page>
  );
}
